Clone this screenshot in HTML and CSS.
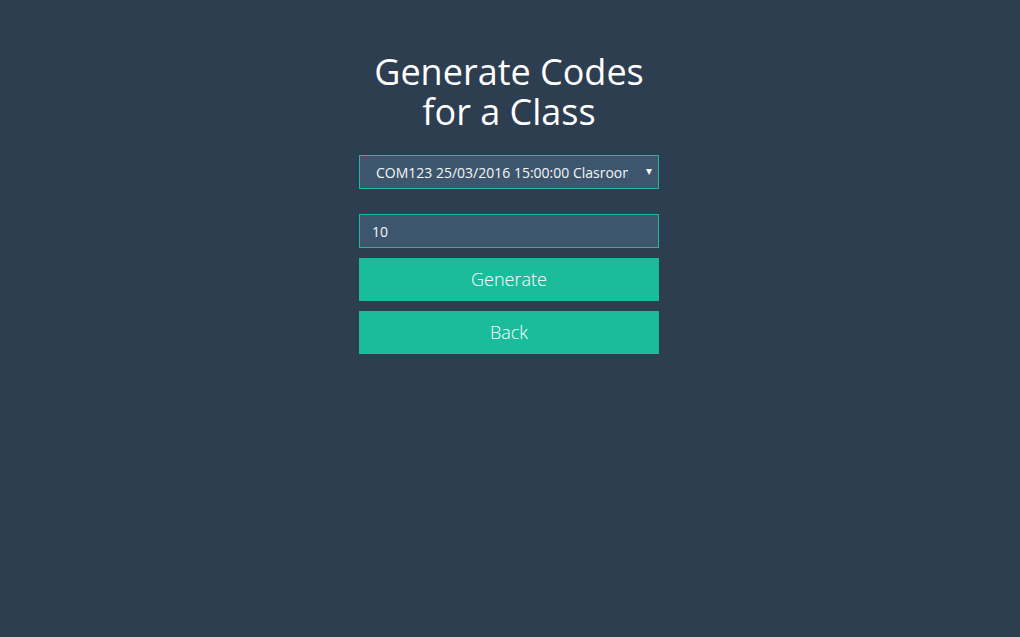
FILE: index.html
```html
<!DOCTYPE html>
<html>
<head>
<meta charset="utf-8">
<title>Generate Codes for a Class</title>
<link rel="stylesheet" href="styles.css">
</head>
<body>
<div class="container">
  <h1 class="title">Generate Codes<br>for a Class</h1>
  <form class="form">
    <div class="select-wrap">
      <select class="select">
        <option>COM123 25/03/2016 15:00:00 Clasroom 1</option>
      </select>
      <span class="arrow">&#9662;</span>
    </div>
    <input class="input" type="text" value="10">
    <button type="button" class="btn">Generate</button>
    <button type="button" class="btn">Back</button>
  </form>
</div>
</body>
</html>
```
FILE: styles.css
```css
html, body {
  margin: 0;
  padding: 0;
  background: #2c3e50;
  height: 100%;
}
body {
  padding-right: 2px;
  box-sizing: border-box;
  font-family: "Open Sans", "Liberation Sans", sans-serif;
}
.container {
  width: 300px;
  margin: 0 auto;
  padding-top: 52px;
}
.title {
  margin: 0;
  font-size: 36px;
  line-height: 40px;
  font-weight: 400;
  color: #ffffff;
  text-align: center;
}
.form {
  display: flex;
  flex-direction: column;
  margin-top: 23px;
}
.select-wrap {
  position: relative;
  margin-bottom: 25px;
}
.select {
  -webkit-appearance: none;
  appearance: none;
  display: block;
  width: 100%;
  height: 34px;
  box-sizing: border-box;
  margin: 0;
  padding: 0 30px 0 16px;
  border: 1px solid #1abc9c;
  border-radius: 0;
  background: #3d566e;
  color: #f4f6f7;
  font-family: "Open Sans", "Liberation Sans", sans-serif;
  font-size: 14px;
  outline: none;
}
.arrow {
  position: absolute;
  right: 7px;
  top: 8px;
  color: #f4f6f7;
  font-size: 12px;
  line-height: 16px;
  pointer-events: none;
}
.input {
  display: block;
  width: 100%;
  height: 34px;
  box-sizing: border-box;
  margin: 0;
  padding: 0 12px;
  border: 1px solid #1abc9c;
  border-radius: 0;
  background: #3d566e;
  color: #f4f6f7;
  font-family: "Open Sans", "Liberation Sans", sans-serif;
  font-size: 14px;
  outline: none;
}
.btn {
  display: block;
  width: 100%;
  height: 43px;
  margin: 10px 0 0;
  padding: 0 0 2px;
  border: none;
  border-radius: 0;
  background: #1abc9c;
  color: #ffffff;
  font-family: "Open Sans", "Liberation Sans", sans-serif;
  font-size: 18px;
  font-weight: 300;
  cursor: pointer;
}
```
